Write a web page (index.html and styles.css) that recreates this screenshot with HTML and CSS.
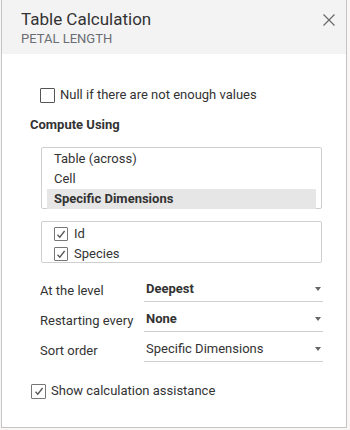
FILE: index.html
```html
<!DOCTYPE html>
<html>
<head>
<meta charset="utf-8">
<link rel="stylesheet" href="styles.css">
</head>
<body>
<div class="dialog">
  <div class="header">
    <div class="titles">
      <div class="title">Table Calculation</div>
      <div class="subtitle">PETAL LENGTH</div>
    </div>
    <svg class="close" width="12" height="12" viewBox="0 0 12 12"><path d="M0.5 0.5 L11.5 11.5 M11.5 0.5 L0.5 11.5" stroke="#666" stroke-width="1.1" fill="none"/></svg>
  </div>
  <div class="body">
    <label class="check null-row"><span class="box"></span><span>Null if there are not enough values</span></label>
    <div class="section">Compute Using</div>
    <div class="listbox options">
      <div class="item">Table (across)</div>
      <div class="item">Cell</div>
      <div class="item selected">Specific Dimensions</div>
    </div>
    <div class="listbox dims">
      <label class="check dim"><span class="box checked"><svg width="10" height="9" viewBox="0 0 10 9"><path d="M1.5 4.8 L3.8 7.2 L8.6 1" stroke="#555" stroke-width="1.3" fill="none"/></svg></span><span>Id</span></label>
      <label class="check dim"><span class="box checked"><svg width="10" height="9" viewBox="0 0 10 9"><path d="M1.5 4.8 L3.8 7.2 L8.6 1" stroke="#555" stroke-width="1.3" fill="none"/></svg></span><span>Species</span></label>
    </div>
    <div class="fields">
      <div class="field"><span class="flabel">At the level</span><div class="select bold"><span>Deepest</span><span class="arrow"></span></div></div>
      <div class="field"><span class="flabel">Restarting every</span><div class="select bold"><span>None</span><span class="arrow"></span></div></div>
      <div class="field"><span class="flabel">Sort order</span><div class="select"><span>Specific Dimensions</span><span class="arrow"></span></div></div>
    </div>
    <label class="check assist"><span class="box checked"><svg width="10" height="9" viewBox="0 0 10 9"><path d="M1.5 4.8 L3.8 7.2 L8.6 1" stroke="#555" stroke-width="1.3" fill="none"/></svg></span><span>Show calculation assistance</span></label>
  </div>
</div>
</body>
</html>
```
FILE: styles.css
```css
* { box-sizing: border-box; }
html, body { margin: 0; padding: 0; }
body {
  background: #fbf6f6;
  font-family: Roboto, "Liberation Sans", Arial, sans-serif;
  color: #333;
  width: 350px;
  height: 430px;
  overflow: hidden;
}
.dialog {
  margin-left: 1px;
  width: 346px;
  height: 428px;
  background: #fff;
  border: 1px solid #c4c4c4;
  border-top: none;
}
.header {
  height: 54px;
  background: #f3f3f3;
  display: flex;
  justify-content: space-between;
  align-items: flex-start;
  padding: 9px 11px 0 19px;
}
.title {
  font-size: 17px;
  line-height: 20px;
  color: #333;
}
.subtitle {
  font-size: 13px;
  line-height: 16px;
  margin-top: 2px;
  color: #6a6d72;
}
.close { margin-top: 5px; }
.body {
  padding: 33px 0 0 28px;
  font-size: 13px;
}
.check {
  display: flex;
  align-items: center;
  line-height: 16px;
}
.box {
  width: 15px;
  height: 15px;
  border: 1px solid #555;
  border-radius: 1px;
  display: inline-flex;
  align-items: center;
  justify-content: center;
  flex: none;
}
.box.checked { border-color: #777; }
.null-row { margin-left: 10px; gap: 5px; }
.section {
  font-weight: bold;
  margin-top: 14px;
  line-height: 16px;
}
.listbox {
  margin-left: 11px;
  width: 281px;
  border: 1px solid #cfcfcf;
  border-radius: 2px;
}
.options {
  margin-top: 14px;
  height: 62px;
  padding: 1px 5px 0 5px;
}
.item {
  height: 20px;
  line-height: 20px;
  padding-left: 7px;
}
.item.selected {
  background: #e6e6e6;
  font-weight: bold;
}
.dims {
  margin-top: 12px;
  height: 42px;
  padding: 2px 0 0 12px;
}
.dim { gap: 6px; height: 20px; }
.dim .box { width: 14px; height: 14px; }
.fields { margin-top: 17px; margin-left: 10px; }
.field {
  display: flex;
  align-items: flex-end;
  height: 30px;
}
.field:first-child { height: 22px; }
.flabel { width: 104px; padding-bottom: 4px; }
.select {
  width: 179px;
  border-bottom: 1px solid #cfcfcf;
  display: flex;
  justify-content: space-between;
  align-items: center;
  padding: 0 1px 4px 2px;
  line-height: 16px;
}
.select.bold { font-weight: bold; }
.arrow {
  width: 0;
  height: 0;
  border-left: 3px solid transparent;
  border-right: 3px solid transparent;
  border-top: 4px solid #666;
  margin-right: 1px;
}
.assist { margin-top: 21px; margin-left: 1px; gap: 5px; }
```
